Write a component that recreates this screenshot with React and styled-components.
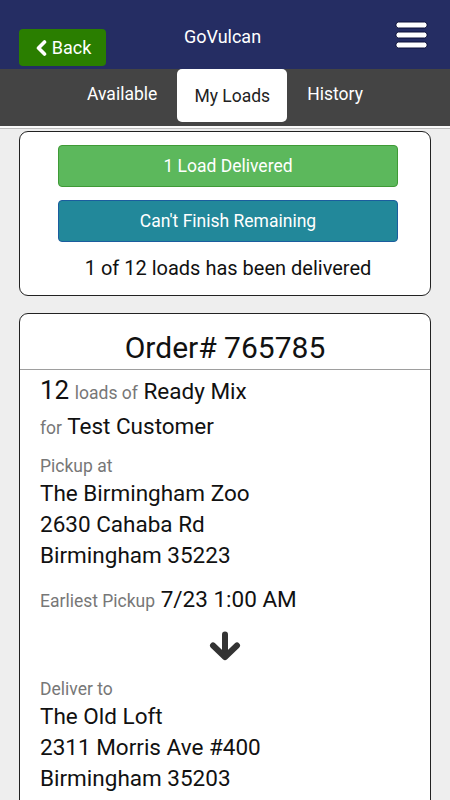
import React from "react";
import styled, { createGlobalStyle } from "styled-components";

const Global = createGlobalStyle`
  html, body { margin: 0; padding: 0; background: #eeeeee; }
  body { font-family: Roboto, "Noto Sans", "Liberation Sans", sans-serif; color: #111; }
  * { box-sizing: border-box; }
`;

const Page = styled.div`
  width: 450px;
  min-height: 800px;
  background: #eeeeee;
  overflow: hidden;
`;

const Header = styled.header`
  height: 69px;
  background: #252d63;
  display: grid;
  grid-template-columns: 1fr auto 1fr;
  align-items: start;
  padding: 0 22px 0 19px;
`;

const BackButton = styled.button`
  justify-self: start;
  margin-top: 29px;
  width: 87px;
  height: 37px;
  background: #2a7e00;
  border: none;
  border-radius: 4px;
  color: #fff;
  font-family: inherit;
  font-size: 18px;
  display: flex;
  align-items: center;
  justify-content: center;
  gap: 5px;
  padding: 0 0 0 2px;
`;

const Title = styled.h1`
  margin: 26px 0 0 -2px;
  font-size: 18px;
  line-height: 22px;
  font-weight: 400;
  color: #fff;
`;

const Burger = styled.div`
  justify-self: end;
  margin-top: 21px;
  width: 33px;
  height: 28px;
`;

const Tabs = styled.nav`
  height: 59px;
  background: #444444;
  display: flex;
  justify-content: center;
  align-items: flex-start;
  gap: 3px;
  border-bottom: 2px solid #fafafa;
  box-shadow: 0 1px 0 #bdbdbd;
`;

const Tab = styled.div`
  height: 53px;
  padding: 0 17px;
  display: flex;
  align-items: center;
  justify-content: center;
  font-size: 17.5px;
  border-radius: 5px;
  color: ${(p) => (p.$active ? "#222" : "#fff")};
  background: ${(p) => (p.$active ? "#fff" : "transparent")};
  width: ${(p) => (p.$active ? "110px" : "auto")};
  padding-bottom: ${(p) => (p.$active ? "0" : "3px")};
`;

const Card = styled.section`
  margin: ${(p) => p.$mt}px 19px 0;
  background: #fff;
  border: 1px solid #222;
  border-radius: 9px;
`;

const StatusBody = styled.div`
  padding: 13px 32px 14px 38px;
  display: flex;
  flex-direction: column;
  gap: 13px;
`;

const ActionButton = styled.button`
  height: 42px;
  width: 100%;
  border-radius: 4px;
  border: 1px solid ${(p) => p.$border};
  background: ${(p) => p.$bg};
  color: #fff;
  font-family: inherit;
  font-size: 17.5px;
`;

const StatusText = styled.div`
  text-align: center;
  font-size: 20px;
  line-height: 26px;
  color: #111;
`;

const OrderHead = styled.div`
  padding: 14px 0 1px;
  text-align: center;
  font-size: 30px;
  line-height: 40px;
  border-bottom: 1px solid #9e9e9e;
`;

const OrderBody = styled.div`
  padding: 4px 20px 0;
`;

const Line = styled.div`
  height: ${(p) => p.$lh || 35}px;
  line-height: ${(p) => p.$lh || 35}px;
  margin-top: ${(p) => p.$mt || 0}px;
  font-size: 22.5px;
  color: #111;
  white-space: nowrap;
`;

const Big = styled.span`
  font-size: 26px;
  line-height: 1;
`;

const Muted = styled.span`
  font-size: 17.5px;
  line-height: 1;
  color: #777;
`;

const Label = styled.div`
  font-size: 17.5px;
  color: #777;
  line-height: 24px;
  margin-top: ${(p) => p.$mt}px;
`;

const ArrowWrap = styled.div`
  display: flex;
  justify-content: center;
  margin-top: ${(p) => p.$mt}px;
  height: 30px;
`;

const Chevron = () => (
  <svg width="11" height="16" viewBox="0 0 11 16">
    <polyline points="8.5,2 2.5,8 8.5,14" fill="none" stroke="#fff" strokeWidth="3.6" strokeLinecap="round" strokeLinejoin="round" />
  </svg>
);

const BurgerIcon = () => (
  <Burger>
    <svg width="33" height="28" viewBox="0 0 33 28">
      {[1, 11, 21].map((y) => (
        <rect key={y} x="1" y={y} width="31" height="6" rx="2.5" fill="#fff" stroke="#0c1038" strokeWidth="1" />
      ))}
    </svg>
  </Burger>
);

const ArrowDown = () => (
  <svg width="32" height="30" viewBox="0 0 32 30">
    <g fill="none" stroke="#333" strokeWidth="6" strokeLinecap="round" strokeLinejoin="round">
      <line x1="16" y1="3.5" x2="16" y2="25" />
      <polyline points="4,14.5 16,26 28,14.5" />
    </g>
  </svg>
);

export default function App() {
  return (
    <Page>
      <Global />
      <Header>
        <BackButton>
          <Chevron />
          Back
        </BackButton>
        <Title>GoVulcan</Title>
        <BurgerIcon />
      </Header>
      <Tabs>
        <Tab>Available</Tab>
        <Tab $active>My Loads</Tab>
        <Tab>History</Tab>
      </Tabs>

      <Card $mt={3}>
        <StatusBody>
          <ActionButton $bg="#5cb85c" $border="#3f9a36">1 Load Delivered</ActionButton>
          <ActionButton $bg="#22889a" $border="#1b5d9e">Can't Finish Remaining</ActionButton>
          <StatusText>1 of 12 loads has been delivered</StatusText>
        </StatusBody>
      </Card>

      <Card $mt={17}>
        <OrderHead>Order# 765785</OrderHead>
        <OrderBody>
          <Line>
            <Big>12</Big> <Muted>loads of</Muted> Ready Mix
          </Line>
          <Line $lh={34}>
            <Muted>for</Muted> Test Customer
          </Line>
          <Label $mt={11}>Pickup at</Label>
          <Line $lh={31}>The Birmingham Zoo</Line>
          <Line $lh={31}>2630 Cahaba Rd</Line>
          <Line $lh={31}>Birmingham 35223</Line>
          <Line $mt={11}>
            <Muted>Earliest Pickup</Muted> 7/23 1:00 AM
          </Line>
          <ArrowWrap $mt={14}>
            <ArrowDown />
          </ArrowWrap>
          <Label $mt={16}>Deliver to</Label>
          <Line $lh={31}>The Old Loft</Line>
          <Line $lh={31}>2311 Morris Ave #400</Line>
          <Line $lh={31}>Birmingham 35203</Line>
          <Line $lh={31}>&nbsp;</Line>
        </OrderBody>
      </Card>
    </Page>
  );
}
